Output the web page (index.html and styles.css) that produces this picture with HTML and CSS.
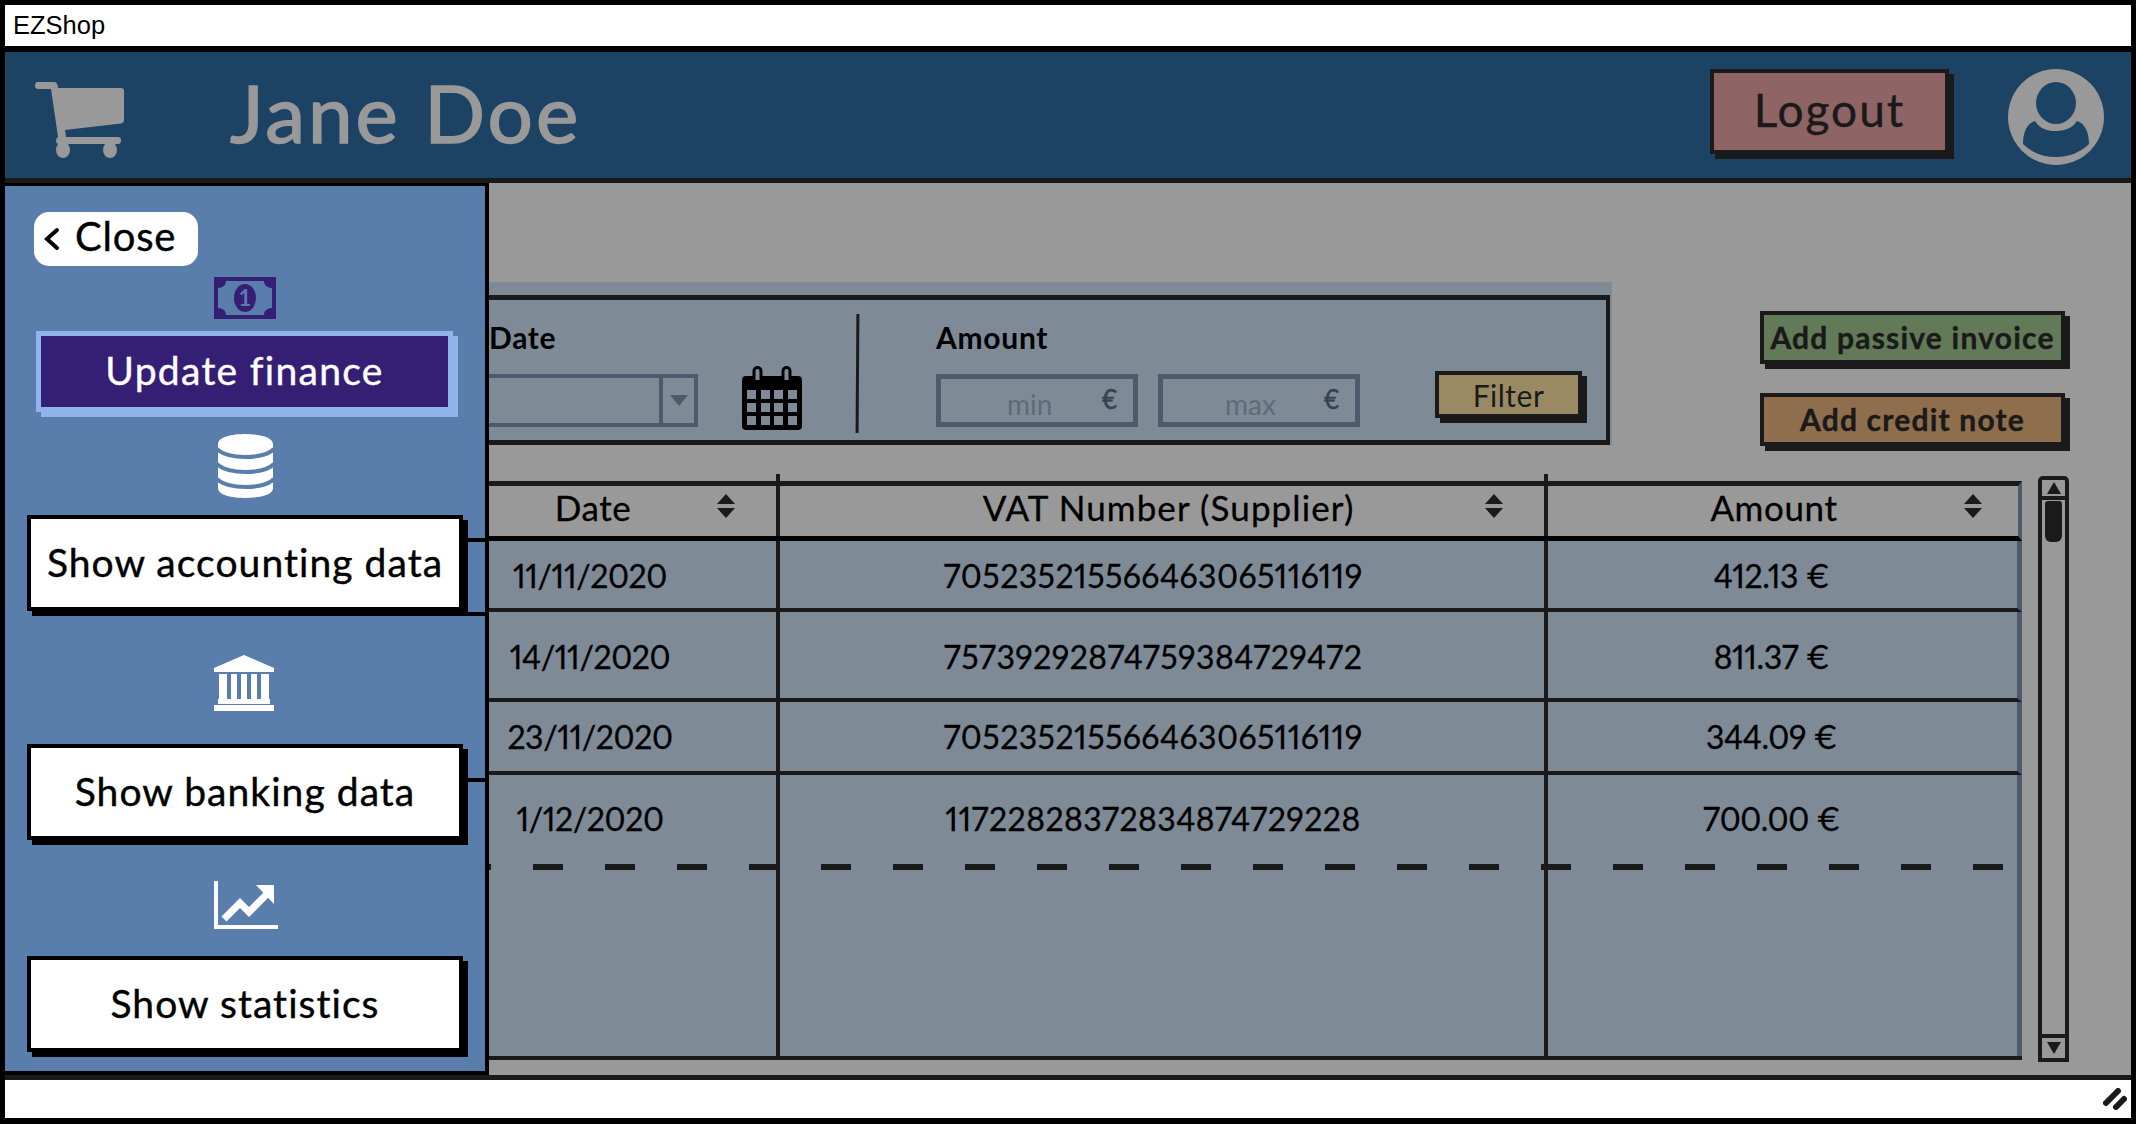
FILE: index.html
```html
<!DOCTYPE html>
<html lang="en">
<head>
<meta charset="utf-8">
<title>EZShop</title>
<link rel="stylesheet" href="styles.css">
</head>
<body>
<div class="window">
  <div class="titlebar">EZShop</div>
  <header class="topbar">
    <svg class="cart" viewBox="0 0 89 76"><path fill="#999" d="M3 0h16c2 0 3 1 3.500 3l.5 3h63c2 0 3 1 3 3v29c0 2-1 3-3 3.500L30 48l1 7h52c2 0 3 1 3 3.500S85 62 83 62H24c-2 0-3-1-3-3.500 0-1.500 1-3 2-3.500L16 7H3C1 7 0 5.500 0 3.500S1 0 3 0z"/><ellipse fill="#999" cx="28" cy="68" rx="7" ry="8"/><ellipse fill="#999" cx="75" cy="68" rx="7" ry="8"/></svg>
    <div class="username">Jane Doe</div>
    <button class="logout">Logout</button>
    <svg class="avatar" viewBox="0 0 96 96"><ellipse fill="#999" cx="48" cy="48" rx="48" ry="48"/><ellipse fill="#1d4364" cx="48" cy="34" rx="20" ry="21"/><path fill="#1d4364" d="M15 75C15 62 20 54 27 52 32 60 40 62 47 62 55 62 64 60 69 52 76 54 81 62 81 75 72 84 60 88 48 88 36 88 24 84 15 75Z"/></svg>
  </header>
  <div class="content">
    <main class="main">
      <div class="top-row">
        <section class="filter-panel">
          <div class="filter-box">
            <div class="date-group">
              <div class="field-label date-label">Date</div>
              <div class="select"><span class="select-btn"><i class="select-arrow"></i></span></div>
            </div>
            <svg class="calendar" viewBox="0 0 60 64"><rect y="10" width="60" height="54" rx="4"/><path fill="#7f8a97" d="M5 24h9v9H5zM19 24h9v9h-9zM32 24h9v9h-9zM46 24h9v9h-9zM5 37h9v9H5zM19 37h9v9h-9zM32 37h9v9h-9zM46 37h9v9h-9zM5 50h9v9H5zM19 50h9v9h-9zM32 50h9v9h-9zM46 50h9v9h-9z"/><path fill="#7f8a97" d="M12 5a3.500 3.500 0 0 1 7 0v9h-7zM41 5a3.500 3.500 0 0 1 7 0v9h-7z"/><path fill="none" stroke="#000" stroke-width="3" d="M12 18V5a3.500 3.500 0 0 1 7 0v13M41 18V5a3.500 3.500 0 0 1 7 0v13"/></svg>
            <div class="separator"></div>
            <div class="amount-group">
              <div class="field-label">Amount</div>
              <div class="inputs">
                <div class="input"><span class="placeholder">min</span><span class="euro">€</span></div>
                <div class="input input-max"><span class="placeholder">max</span><span class="euro">€</span></div>
              </div>
            </div>
            <button class="filter-btn">Filter</button>
          </div>
        </section>
        <div class="actions">
          <button class="action action-green">Add passive invoice</button>
          <button class="action action-brown">Add credit note</button>
        </div>
      </div>
      <div class="bottom-row">
        <div class="table">
          <div class="row head">
            <div class="cell">Date<svg class="sort" viewBox="0 0 18 24"><path d="M9 0l9 10H0zM0 14h18l-9 10z"/></svg></div>
            <div class="cell">VAT Number (Supplier)<svg class="sort" viewBox="0 0 18 24"><path d="M9 0l9 10H0zM0 14h18l-9 10z"/></svg></div>
            <div class="cell">Amount<svg class="sort" viewBox="0 0 18 24"><path d="M9 0l9 10H0zM0 14h18l-9 10z"/></svg></div>
          </div>
          <div class="row body r1"><div class="cell">11/11/2020</div><div class="cell">705235215566463065116119</div><div class="cell">412.13 €</div></div>
          <div class="row body r2"><div class="cell">14/11/2020</div><div class="cell">75739292874759384729472</div><div class="cell">811.37 €</div></div>
          <div class="row body r3"><div class="cell">23/11/2020</div><div class="cell">705235215566463065116119</div><div class="cell">344.09 €</div></div>
          <div class="row body r4"><div class="cell">1/12/2020</div><div class="cell">11722828372834874729228</div><div class="cell">700.00 €</div></div>
          <div class="row body empty"><div class="cell"></div><div class="cell"></div><div class="cell"></div><div class="dashes"></div></div>
        </div>
        <div class="scrollbar">
          <div class="scroll-cap"><i class="tri tri-up"></i></div>
          <div class="thumb"></div>
          <div class="scroll-track"></div>
          <div class="scroll-cap scroll-cap-down"><i class="tri tri-down"></i></div>
        </div>
      </div>
    </main>
    <aside class="drawer">
      <button class="close"><svg class="chevron" viewBox="0 0 16 24"><path fill="none" stroke="#000" stroke-width="4" stroke-linecap="round" d="M13 3L3 12l10 9"/></svg>Close</button>
      <svg class="ico-money" viewBox="0 0 62 42"><rect width="62" height="42" fill="#351f75"/><path fill="#5a7eab" d="M12 4h38c0 4 3 7 8 7v20c-5 0-8 3-8 7H12c0-4-3-7-8-7V11c5 0 8-3 8-7z"/><ellipse cx="31" cy="21" rx="11" ry="14" fill="#351f75"/><text class="money-one" x="31" y="29" text-anchor="middle">1</text></svg>
      <button class="update">Update finance</button>
      <svg class="ico-db" viewBox="0 0 55 64"><path fill="#fff" d="M0 10C0 3 14 0 27.500 0S55 3 55 10v44c0 7-14 10-27.500 10S0 61 0 54z"/><path fill="none" stroke="#5a7eab" stroke-width="4" d="M-1 15c6 6 18 8 28.500 8S50 21 56 15M-1 30c6 6 18 8 28.500 8S50 36 56 30M-1 45c6 6 18 8 28.500 8S50 51 56 45"/></svg>
      <button class="nav-btn nav-first">Show accounting data</button>
      <svg class="ico-bank" viewBox="0 0 60 56"><path fill="#fff" d="M30 0l30 13v4H0v-4zM5 19h8v25H5zM17 19h6v25h-6zM27 19h6v25h-6zM37 19h6v25h-6zM47 19h8v25h-8zM4 44h52v5H4zM0 50h60v6H0z"/></svg>
      <button class="nav-btn nav-second">Show banking data</button>
      <svg class="ico-chart" viewBox="0 0 64 48"><path fill="#fff" d="M0 0h4v44h60v4H0z"/><path fill="none" stroke="#fff" stroke-width="7" d="M10 38l16-16 9 9 17-17"/><path fill="#fff" d="M42 4h18v19z"/></svg>
      <button class="nav-btn nav-third">Show statistics</button>
      <span class="tick t1"></span><span class="tick t2"></span><span class="tick t3"></span>
    </aside>
  </div>
  <footer class="statusbar">
    <svg class="grip" viewBox="0 0 24 22"><path fill="none" stroke="#1a1a1a" stroke-width="6" stroke-linecap="round" d="M3 15L15 3M13 19l8-8"/></svg>
  </footer>
</div>
</body>
</html>
```
FILE: styles.css
```css
* { box-sizing: border-box; }
html, body { margin: 0; height: 100%; overflow: hidden; }
body { font-family: Lato, "Open Sans", sans-serif; color: #000; background: #fff; }
button { font: inherit; color: inherit; padding: 0; cursor: pointer; }

.window {
  height: 100vh;
  border: 5px solid #000;
  border-bottom-width: 6px;
  display: flex;
  flex-direction: column;
}

.titlebar {
  height: 47px;
  flex: none;
  border-bottom: 6px solid #000;
  background: #fff;
  padding-left: 8px;
  font: 25.500px/40px "Liberation Sans", Arial, sans-serif;
}

.topbar {
  height: 131px;
  flex: none;
  display: flex;
  align-items: center;
  background: #1d4364;
  border-bottom: 5px solid #1a1a1a;
  padding: 0 27px 0 30px;
}
.cart { width: 89px; height: 76px; margin-top: 10px; flex: none; }
.username {
  margin: -6px 0 0 106px;
  font-size: 80px;
  letter-spacing: 3px;
  color: #999;
  line-height: 90px;
  -webkit-text-stroke: 1.5px #999;
}
.logout {
  margin-left: auto;
  margin-bottom: 7px;
  padding-bottom: 4px;
  width: 239px;
  height: 85px;
  border: 4px solid #1a1a1a;
  box-shadow: 5px 5px 0 #1a1a1a;
  background: #8f6464;
  color: #1a1a1a;
  font-size: 46px;
  letter-spacing: 2px;
  -webkit-text-stroke: .4px #1a1a1a;
}
.avatar { width: 96px; height: 96px; margin: 3px 0 0 59px; flex: none; }

.content { flex: 1; position: relative; background: #999; min-height: 0; }
.main { height: 100%; padding: 99px 0 15px 395px; display: flex; flex-direction: column; }

.top-row { display: flex; flex: none; }
.filter-panel { width: 1212px; height: 163px; background: #7f8a97; padding-top: 13px; }
.filter-box {
  height: 150px;
  border: solid #1a1a1a;
  border-width: 5px 4px 5px 0;
  margin-right: 2px;
  display: flex;
  align-items: flex-start;
}
.date-group { width: 298px; flex: none; padding-top: 19px; }
.field-label { font-size: 30px; line-height: 36px; font-weight: 700; color: #000; letter-spacing: .7px; }
.date-label { padding-left: 89px; }
.select {
  margin-top: 19px;
  height: 53px;
  border: 4px solid #4c5a6b;
  border-left: 0;
  display: flex;
  justify-content: flex-end;
}
.select-btn { width: 35px; border-left: 4px solid #4c5a6b; display: flex; align-items: center; justify-content: center; }
.select-arrow { border: 9px solid transparent; border-top: 11px solid #4c5a6b; border-bottom: 0; }
.calendar { width: 60px; height: 64px; margin: 66px 0 0 44px; flex: none; overflow: visible; }
.separator { width: 3px; height: 119px; margin: 14px 0 0 54px; background: #1a1a1a; flex: none; transform: rotate(.4deg); }
.amount-group { margin-left: 77px; padding-top: 19px; flex: none; }
.inputs { display: flex; gap: 20px; margin-top: 19px; }
.input {
  width: 202px;
  height: 53px;
  border: 5px solid #4c5a6b;
  position: relative;
  display: flex;
  justify-content: space-between;
  padding: 0 16px 0 66px;
  align-items: center;
}
.input-max { padding-left: 62px; }
.placeholder { font-size: 28px; color: #5f6b79; margin-top: 7px; }
.euro { font-size: 26px; color: #36414f; margin-top: -4px; -webkit-text-stroke: .5px #36414f; }
.filter-btn {
  width: 147px;
  height: 47px;
  margin: 71px 0 0 75px;
  flex: none;
  background: #998a63;
  border: 4px solid #1a1a1a;
  box-shadow: 5px 5px 0 #1a1a1a;
  color: #1a1a1a;
  font-size: 30px;
  line-height: 36px;
  letter-spacing: .5px;
}

.actions { margin-left: 148px; padding-top: 29px; display: flex; flex-direction: column; gap: 29px; }
.action {
  width: 305px;
  height: 53px;
  border: 4px solid #1a1a1a;
  box-shadow: 5px 5px 0 #1a1a1a;
  color: #1a1a1a;
  font-size: 30px;
  font-weight: 700;
  letter-spacing: 1.2px;
  padding-bottom: 2px;
  white-space: nowrap;
  -webkit-text-stroke: .4px #1a1a1a;
}
.action-green { background: #637a58; }
.action-brown { background: #8f6e4d; }

.bottom-row { flex: 1; min-height: 0; display: flex; margin-top: 30px; }
.table { width: 1622px; margin-top: 5px; flex: none; display: flex; flex-direction: column; position: relative; border-bottom: 4px solid #1a1a1a; }
.row { display: grid; grid-template-columns: 376px 768px 1fr; flex: none; position: relative; }
.cell { display: flex; align-items: center; justify-content: center; position: relative; border-left: 4px solid #1a1a1a; white-space: nowrap; }
.cell:first-child { border-left: 0; }
.head { height: 60px; border-top: 5px solid #1a1a1a; border-bottom: 5px solid #000; border-right: 4px solid #4c5a6b; font-size: 35px; letter-spacing: .6px; -webkit-text-stroke: .3px #000; }
.head .cell { padding-bottom: 8px; }
.head .cell:nth-child(1) { padding-left: 10px; }
.head .cell:nth-child(2) { padding-left: 13px; letter-spacing: 1.1px; }
.head .cell:nth-child(3) { padding-right: 18px; }
.head .cell:nth-child(n+2)::before {
  content: "";
  position: absolute;
  left: -4px;
  top: -12px;
  width: 4px;
  height: 12px;
  background: #1a1a1a;
}
.sort { position: absolute; right: 41px; top: 8px; width: 18px; height: 24px; fill: #1a1a1a; }
.head .cell:nth-child(3) .sort { right: 36px; }
.body {
  background: #7f8a97;
  font-size: 32px;
  font-variant-numeric: proportional-nums;
  letter-spacing: -.4px;
  -webkit-text-stroke: .3px #000;
  border-right: 5px solid #4c5a6b;
  border-bottom: 4px solid #1a1a1a;
}
.body .cell:nth-child(1) { padding-left: 4px; }
.body .cell:nth-child(2) { padding-right: 18px; letter-spacing: .45px; }
.body .cell:nth-child(3) { padding-right: 22px; }
.r1 .cell, .r2 .cell { padding-top: 2px; }
.r1 { height: 71px; }
.r2 { height: 90px; }
.r3 { height: 73px; }
.r4 { height: 89px; border-bottom: 0; }
.r4 .cell { padding-bottom: 3px; }
.empty { flex: 1; border-bottom: 0; }
.dashes {
  position: absolute;
  left: 0;
  right: 0;
  top: 0;
  height: 6px;
  background-image: linear-gradient(90deg, #1a1a1a 30px, transparent 30px);
  background-size: 72px 6px;
  background-position: 61px 0;
}

.scrollbar {
  width: 31px;
  margin-left: 16px;
  margin-bottom: -2px;
  flex: none;
  border: 4px solid #1a1a1a;
  border-radius: 5px 5px 0 0;
  display: flex;
  flex-direction: column;
}
.scroll-cap { height: 20px; flex: none; border-bottom: 4px solid #1a1a1a; display: flex; align-items: center; justify-content: center; }
.scroll-cap-down { height: 24px; border-bottom: 0; border-top: 4px solid #1a1a1a; }
.tri { border: 7px solid transparent; }
.tri-up { border-bottom: 12px solid #1a1a1a; border-top: 0; }
.tri-down { border-top: 12px solid #1a1a1a; border-bottom: 0; }
.thumb { width: 17px; height: 41px; margin: 1px auto 0; background: #1a1a1a; border-radius: 3px 3px 6px 6px; flex: none; }
.scroll-track { flex: 1; }

.drawer {
  position: absolute;
  left: 0;
  top: 0;
  bottom: 0;
  width: 484px;
  background: #5a7eab;
  border: solid #000;
  border-width: 3px 4px 4px 0;
  padding: 26px 0 0 22px;
  display: flex;
  flex-direction: column;
  align-items: flex-start;
}
.close {
  width: 164px;
  height: 54px;
  margin-left: 7px;
  background: #fff;
  border: 0;
  border-radius: 15px;
  font-size: 40px;
  line-height: 48px;
  letter-spacing: .8px;
  display: flex;
  align-items: center;
  padding: 0 0 6px 10px;
  -webkit-text-stroke: .4px #000;
}
.chevron { width: 16px; height: 24px; margin: 6px 15px 0 0; flex: none; }
.ico-money { width: 62px; height: 42px; margin: 11px 0 0 187px; flex: none; }
.money-one { font: 700 22px Lato, sans-serif; fill: #5a7eab; }
.update {
  width: 417px;
  height: 81px;
  margin: 12px 0 0 9px;
  flex: none;
  background: #351f75;
  color: #fff;
  border: 5px solid #8fb5ec;
  box-shadow: 5px 5px 0 #8fb5ec;
  font-size: 39px;
  letter-spacing: 1.3px;
  padding-bottom: 3px;
  -webkit-text-stroke: .4px #fff;
}
.ico-db { width: 55px; height: 64px; margin: 22px 0 0 191px; flex: none; }
.nav-btn {
  width: 436px;
  height: 96px;
  padding-bottom: 3px;
  background: #fff;
  border: 4px solid #000;
  box-shadow: 5px 5px 0 #000;
  font-size: 39px;
  letter-spacing: 1.05px;
  flex: none;
  white-space: nowrap;
  -webkit-text-stroke: .4px #000;
}
.nav-first { margin-top: 17px; }
.nav-second { margin-top: 33px; }
.nav-third { margin-top: 27px; }
.ico-bank { width: 60px; height: 56px; margin: 44px 0 0 187px; flex: none; }
.ico-chart { width: 64px; height: 48px; margin: 41px 0 0 187px; flex: none; }
.tick { position: absolute; left: 463px; width: 17px; height: 4px; background: #000; }
.t1 { top: 352px; }
.t2 { top: 426px; }
.t3 { top: 592px; }

.statusbar { height: 43px; flex: none; background: #fff; border-top: 5px solid #1a1a1a; display: flex; align-items: center; justify-content: flex-end; padding-right: 4px; }
.grip { width: 24px; height: 22px; }
```
